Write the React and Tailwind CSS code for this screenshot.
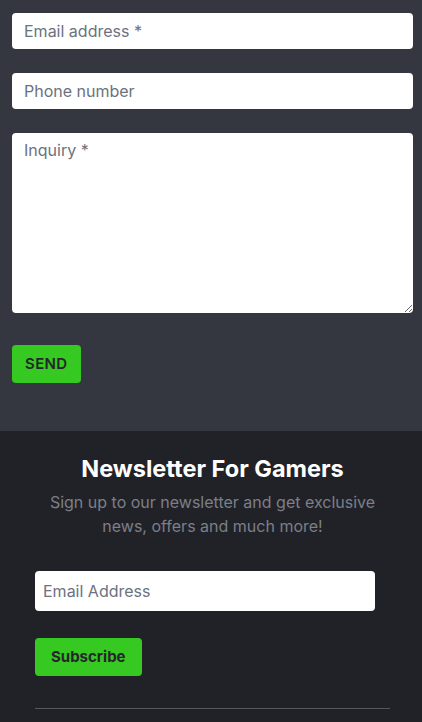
export default function App() {
  return (
    <div className="w-[422px] min-h-[722px] bg-[#212227] font-['Inter',sans-serif]">
      <section className="bg-[#343640] px-3 pt-[13px] pb-12">
        <form className="flex flex-col" onSubmit={e => e.preventDefault()}>
          <input
            type="email"
            placeholder="Email address *"
            className="h-9 w-[401px] rounded bg-white px-3 text-base text-gray-800 placeholder:text-[#6b7280] outline-none"
          />
          <input
            type="tel"
            placeholder="Phone number"
            className="mt-6 h-9 w-[401px] rounded bg-white px-3 text-base text-gray-800 placeholder:text-[#6b7280] outline-none"
          />
          <textarea
            placeholder="Inquiry *"
            className="mt-6 h-[180px] w-[401px] rounded bg-white px-3 py-[5px] text-base text-gray-800 placeholder:text-[#6b7280] outline-none"
          />
          <div className="mt-8">
            <button className="h-[38px] rounded bg-[#36c922] px-[13px] text-[15px] font-semibold tracking-wide text-[#25262b]">
              SEND
            </button>
          </div>
        </form>
      </section>

      <section className="pl-[35px] pt-6 pb-[13px]">
        <div className="w-[355px]">
          <h2 className="text-center text-[23.5px] leading-7 font-bold text-white">Newsletter For Gamers</h2>
          <p className="mx-auto mt-[7px] max-w-[330px] text-center text-base leading-6 text-[#7c7f87]">
            Sign up to our newsletter and get exclusive news, offers and much more!
          </p>
          <input
            type="email"
            placeholder="Email Address"
            className="mt-[33px] h-10 w-[340px] rounded bg-white px-2 text-base text-gray-800 placeholder:text-[#6b7280] outline-none"
          />
          <div className="mt-[27px]">
            <button className="h-[38px] rounded bg-[#36c922] px-4 text-[15px] font-bold text-[#25262b]">
              Subscribe
            </button>
          </div>
          <div className="mt-8 h-px bg-[#55575d]" />
        </div>
      </section>
    </div>
  )
}
